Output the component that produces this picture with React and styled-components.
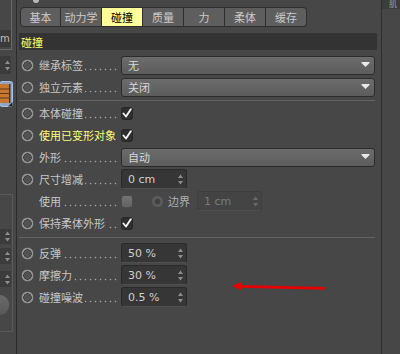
import React from "react";
import styled, { createGlobalStyle } from "styled-components";

const GlobalStyle = createGlobalStyle`
  html, body {
    margin: 0;
    padding: 0;
    background: #474747;
  }
  body {
    font-family: "DejaVu Sans", "Noto Sans CJK SC", sans-serif;
    font-size: 11px;
  }
`;

const Screen = styled.div`
  position: relative;
  width: 400px;
  height: 354px;
  display: flex;
  background: #474747;
  overflow: hidden;
`;

/* ---------- left neighbour panel (cut off) ---------- */

const LeftStrip = styled.div`
  width: 16px;
  flex-shrink: 0;
  border-right: 1px solid #2c2c2c;
  display: flex;
  flex-direction: column;
`;

const LeftTopBox = styled.div`
  width: 12px;
  height: 50px;
  border-right: 1px solid #6a6a6a;
  border-bottom: 1px solid #6a6a6a;
  display: flex;
  flex-direction: column;
  justify-content: flex-end;
  padding-bottom: 2px;
  box-sizing: border-box;
`;

const LeftInput = styled.div`
  height: 17px;
  background: #3a3a3a;
  color: #bdbdbd;
  display: flex;
  align-items: center;
  font-size: 10px;
  white-space: nowrap;
`;

const LeftSpinner = styled.div`
  width: 11px;
  height: ${(p) => p.$h || 17}px;
  margin-top: ${(p) => p.$mt || 0}px;
  background: #3b3b3b;
  display: flex;
  align-items: center;
  justify-content: flex-end;
  padding-right: 1px;
  box-sizing: border-box;
`;

const LeftIcon = styled.div`
  margin-top: 7px;
  width: 13px;
  height: 26px;
`;

const LeftLowerBox = styled.div`
  margin-top: 87px;
  width: 13px;
  height: 138px;
  border-top: 1px solid #595959;
  border-right: 1px solid #595959;
  border-bottom: 1px solid #595959;
  box-sizing: border-box;
  display: flex;
  flex-direction: column;
`;

const LeftRound = styled.div`
  margin-top: 8px;
  width: 9px;
  height: 20px;
  border-radius: 0 10px 10px 0;
  background: linear-gradient(#6a6a6a, #585858);
`;

/* ---------- main attribute panel ---------- */

const Main = styled.div`
  width: 364px;
  flex-shrink: 0;
  display: flex;
  flex-direction: column;
  padding: 0 6px 0 2px;
  box-sizing: border-box;
`;

const TopBar = styled.div`
  height: 7px;
  display: flex;
  align-items: flex-start;
`;

const TopBlob = styled.span`
  margin-left: 14px;
  width: 6px;
  height: 3px;
  border-radius: 0 0 3px 3px;
  background: #b8b8b8;
`;

const Tabs = styled.div`
  display: flex;
  margin-left: 1px;
  height: 20px;
`;

const Tab = styled.div`
  width: 41px;
  height: 20px;
  box-sizing: border-box;
  border: 1px solid #2e2e2e;
  border-left: none;
  background: ${(p) => (p.$active ? "#ffff99" : "#5e5e5e")};
  color: ${(p) => (p.$active ? "#000" : "#cacaca")};
  display: flex;
  align-items: center;
  justify-content: center;
  font-size: 11px;

  &:first-child {
    border-left: 1px solid #2e2e2e;
    border-radius: 4px 0 0 4px;
  }
  &:last-child {
    border-radius: 0 4px 4px 0;
  }
`;

const Header = styled.div`
  margin-top: 6px;
  margin-right: -2px;
  height: 17px;
  background: #333333;
  color: #ffff66;
  padding-left: 2px;
  display: flex;
  align-items: center;
  font-size: 11px;
`;

const Content = styled.div`
  margin-top: 4px;
  display: flex;
  flex-direction: column;
`;

const Separator = styled.div`
  height: 1px;
  background: #636363;
  margin: ${(p) => p.$top}px 0 ${(p) => p.$bottom}px;
`;

const Row = styled.div`
  height: 22px;
  display: flex;
  align-items: center;
`;

const Radio = styled.span`
  margin-left: 2px;
  width: 13px;
  height: 13px;
  border-radius: 50%;
  flex-shrink: 0;
  visibility: ${(p) => (p.$hidden ? "hidden" : "visible")};
  background: radial-gradient(
    circle closest-side,
    #525252 0 50%,
    #404040 55% 62%,
    #929292 68% 86%,
    #5a5a5a 92%,
    transparent 100%
  );
`;

const Label = styled.div`
  margin-left: 5px;
  width: 82px;
  height: 22px;
  display: flex;
  align-items: center;
  color: ${(p) => (p.$highlight ? "#ffff77" : "#c6c6c6")};
  white-space: nowrap;
`;

const Leader = styled.span`
  flex: 1;
  align-self: stretch;
  margin-left: 2px;
  margin-right: 3px;
  background-image: radial-gradient(circle, #a4a4a4 0 0.6px, transparent 1.1px);
  background-size: 5px 3px;
  background-repeat: repeat-x;
  background-position: right 0 bottom 5px;
`;

const Dropdown = styled.div`
  flex: 1;
  height: 19px;
  box-sizing: border-box;
  border: 1px solid #2c2c2c;
  border-radius: 3px;
  background: linear-gradient(#6c6c6c, #5c5c5c);
  color: #d6d6d6;
  padding: 0 4px 0 6px;
  display: flex;
  align-items: center;
  justify-content: space-between;
`;

const NumberBox = styled.div`
  width: ${(p) => p.$w || 66}px;
  height: 20px;
  box-sizing: border-box;
  border: 1px solid ${(p) => (p.$disabled ? "#3e3e3e" : "#2a2a2a")};
  border-bottom-color: ${(p) => (p.$disabled ? "#4e4e4e" : "#505050")};
  border-radius: 3px;
  background: ${(p) => (p.$disabled ? "#444444" : "#363636")};
  color: ${(p) => (p.$disabled ? "#7a7a7a" : "#cfcfcf")};
  padding: 0 3px 0 6px;
  display: flex;
  align-items: center;
  justify-content: space-between;
  margin-left: ${(p) => p.$ml || 0}px;
`;

const Check = styled.span`
  width: 12px;
  height: 13px;
  border-radius: 3px;
  box-sizing: border-box;
  background: ${(p) => (p.$on ? "#2e2e2e" : "linear-gradient(#747474, #626262)")};
  border: 1px solid ${(p) => (p.$on ? "#262626" : "#4a4a4a")};
  display: flex;
  align-items: center;
  justify-content: center;
`;

const SmallRadio = styled.span`
  margin-left: 19px;
  width: 11px;
  height: 11px;
  border-radius: 50%;
  background: radial-gradient(circle, #404040 0 2.6px, #5c5c5c 3.2px);
`;

const InlineLabel = styled.span`
  margin-left: 5px;
  color: #b0b0b0;
  width: 24px;
  white-space: nowrap;
`;

/* ---------- right neighbour panel ---------- */

const RightStrip = styled.div`
  flex: 1;
  border-left: 1px solid #2e2e2e;
  display: flex;
  flex-direction: column;
`;

const RightTop = styled.div`
  height: 9px;
  background: #3c3c3c;
  color: #8da0b8;
  font-size: 8px;
  line-height: 9px;
  padding-left: 7px;
`;

const Overlay = styled.svg`
  position: absolute;
  left: 0;
  top: 0;
  pointer-events: none;
`;

/* ---------- little drawings ---------- */

const DownArrow = () => (
  <svg width="9" height="6" viewBox="0 0 9 6">
    <rect x="0.5" y="0" width="8" height="1" fill="#e8e8e8" />
    <polygon points="0.5,1 8.5,1 4.5,5" fill="#e8e8e8" />
  </svg>
);

const Spin = ({ color = "#8e8e8e" }) => (
  <svg width="5" height="11" viewBox="0 0 5 11">
    <polygon points="0,4 5,4 2.5,0.5" fill={color} />
    <polygon points="0,7 5,7 2.5,10.5" fill={color} />
  </svg>
);

const Tick = () => (
  <svg width="10" height="10" viewBox="0 0 10 10">
    <path d="M1.5 5.5 L4 8.5 L8.8 1.2" fill="none" stroke="#f2f2f2" strokeWidth="1.9" strokeLinecap="round" strokeLinejoin="round" />
  </svg>
);

const FilmIcon = () => (
  <svg width="13" height="26" viewBox="0 0 13 26">
    <rect x="0" y="0.5" width="12.5" height="25" rx="2" fill="#8fa6c9" stroke="#a9c0e6" />
    <rect x="0" y="3" width="9" height="19" fill="#c9772e" />
    <rect x="0" y="7.5" width="9" height="1" fill="#5a3a1a" />
    <rect x="0" y="12" width="9" height="1" fill="#5a3a1a" />
    <rect x="0" y="16.5" width="9" height="1" fill="#5a3a1a" />
    <rect x="9" y="3" width="1.5" height="19" fill="#3a3a3a" />
    <polygon points="12.5,21 12.5,25.5 8,25.5" fill="#222" />
  </svg>
);

const tabs = ["基本", "动力学", "碰撞", "质量", "力", "柔体", "缓存"];

const Field = ({ label, highlight, noRadio, children }) => (
  <Row>
    <Radio $hidden={noRadio} />
    <Label $highlight={highlight}>
      {label}
      <Leader />
    </Label>
    {children}
  </Row>
);

const Select = ({ value }) => (
  <Dropdown>
    <span>{value}</span>
    <DownArrow />
  </Dropdown>
);

const Num = ({ value, ...rest }) => (
  <NumberBox {...rest}>
    <span>{value}</span>
    <Spin color={rest.$disabled ? "#6a6a6a" : "#8e8e8e"} />
  </NumberBox>
);

export default function App() {
  return (
    <>
      <GlobalStyle />
      <Screen>
        <LeftStrip>
          <LeftTopBox>
            <LeftInput>m</LeftInput>
          </LeftTopBox>
          <LeftSpinner $mt={6} $h={18}>
            <Spin />
          </LeftSpinner>
          <LeftIcon>
            <FilmIcon />
          </LeftIcon>
          <LeftLowerBox>
            <LeftSpinner $mt={34} $h={15}>
              <Spin />
            </LeftSpinner>
            <LeftSpinner $mt={4} $h={16}>
              <Spin />
            </LeftSpinner>
            <LeftSpinner $mt={7} $h={16}>
              <Spin />
            </LeftSpinner>
            <LeftRound />
          </LeftLowerBox>
        </LeftStrip>

        <Main>
          <TopBar>
            <TopBlob />
          </TopBar>
          <Tabs>
            {tabs.map((t) => (
              <Tab key={t} $active={t === "碰撞"}>
                {t}
              </Tab>
            ))}
          </Tabs>
          <Header>碰撞</Header>

          <Content>
            <Field label="继承标签">
              <Select value="无" />
            </Field>
            <Field label="独立元素">
              <Select value="关闭" />
            </Field>

            <Separator $top={2} $bottom={1} />

            <Field label="本体碰撞">
              <Check $on>
                <Tick />
              </Check>
            </Field>
            <Field label="使用已变形对象" highlight>
              <Check $on>
                <Tick />
              </Check>
            </Field>
            <Field label="外形">
              <Select value="自动" />
            </Field>
            <Field label="尺寸增减">
              <Num value="0 cm" />
            </Field>
            <Field label="使用" noRadio>
              <Check />
              <SmallRadio />
              <InlineLabel>边界</InlineLabel>
              <Num value="1 cm" $disabled $w={65} $ml={5} />
            </Field>
            <Field label="保持柔体外形">
              <Check $on>
                <Tick />
              </Check>
            </Field>

            <Separator $top={3} $bottom={4} />

            <Field label="反弹">
              <Num value="50 %" />
            </Field>
            <Field label="摩擦力">
              <Num value="30 %" />
            </Field>
            <Field label="碰撞噪波">
              <Num value="0.5 %" />
            </Field>
          </Content>
        </Main>

        <RightStrip>
          <RightTop>肌</RightTop>
        </RightStrip>

        <Overlay width="400" height="354" viewBox="0 0 400 354">
          <line x1="325" y1="288.4" x2="240" y2="286.4" stroke="#e80000" strokeWidth="2.6" />
          <polygon points="232,286 242,281.8 242,290.6" fill="#e80000" />
        </Overlay>
      </Screen>
    </>
  );
}
